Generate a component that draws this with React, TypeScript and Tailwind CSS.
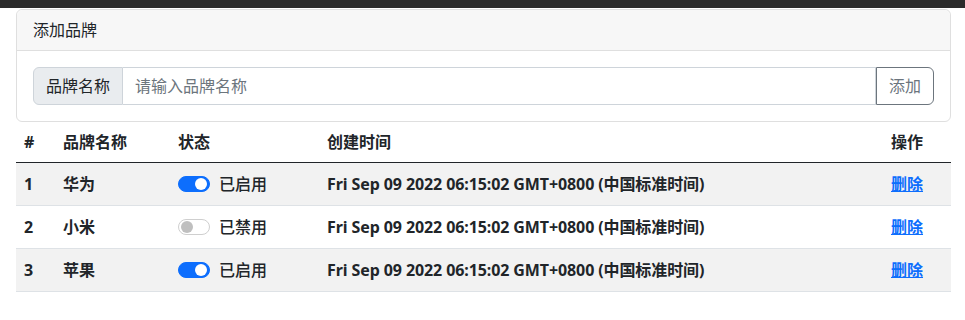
import { useState } from 'react'

type Brand = { id: number; name: string; enabled: boolean; createdAt: string }

const initialBrands: Brand[] = [
  { id: 1, name: '华为', enabled: true, createdAt: 'Fri Sep 09 2022 06:15:02 GMT+0800 (中国标准时间)' },
  { id: 2, name: '小米', enabled: false, createdAt: 'Fri Sep 09 2022 06:15:02 GMT+0800 (中国标准时间)' },
  { id: 3, name: '苹果', enabled: true, createdAt: 'Fri Sep 09 2022 06:15:02 GMT+0800 (中国标准时间)' },
]

// 开关组件
function Switch({ on }: { on: boolean }) {
  return (
    <span
      className={`flex items-center w-8 h-4 rounded-full border px-[2px] shrink-0 ${
        on ? 'bg-[#0d6efd] border-[#0d6efd] justify-end' : 'bg-white border-[#cfcfcf] justify-start'
      }`}
    >
      <span className={`w-[12px] h-[12px] rounded-full ${on ? 'bg-white' : 'bg-[#bfbfbf]'}`}></span>
    </span>
  )
}

export default function App() {
  const [brands] = useState(initialBrands)

  return (
    <div
      className="min-h-screen bg-white text-[#212529] text-base"
      style={{ fontFamily: '"Noto Sans", "Noto Sans CJK SC", sans-serif' }}
    >
      <div className="h-2 bg-[#2b2b2b]"></div>

      <div className="pl-4 pr-[14px] pt-px">
        {/* 添加品牌 */}
        <div className="border border-[#dfdfdf] rounded-md">
          <div className="bg-[#f7f7f7] border-b border-[#dfdfdf] px-4 py-2 leading-6 rounded-t-md">添加品牌</div>
          <div className="p-4">
            <div className="flex h-[38px]">
              <span className="flex items-center px-3 bg-[#e9ecef] border border-[#ced4da] rounded-l-md">品牌名称</span>
              <input
                className="flex-1 border border-l-0 border-[#ced4da] px-3 outline-none placeholder:text-[#6c757d]"
                placeholder="请输入品牌名称"
              />
              <button className="px-3 border border-[#6c757d] text-[#6c757d] rounded-r-md">添加</button>
            </div>
          </div>
        </div>

        {/* 品牌列表 */}
        <table className="w-full border-collapse text-left">
          <thead>
            <tr className="border-b border-[#212529]">
              <th className="w-[39px] px-2 py-2 leading-6 font-bold">#</th>
              <th className="w-[115px] px-2 py-2 leading-6 font-bold">品牌名称</th>
              <th className="w-[149px] px-2 py-2 leading-6 font-bold">状态</th>
              <th className="px-2 py-2 leading-6 font-bold">创建时间</th>
              <th className="w-[68px] px-2 py-2 leading-6 font-bold">操作</th>
            </tr>
          </thead>
          <tbody>
            {brands.map((b, i) => (
              <tr key={b.id} className={`border-b border-[#dee2e6] font-bold ${i % 2 === 0 ? 'bg-[#f2f2f2]' : 'bg-white'}`}>
                <td className="px-2 py-2 h-[43px]">{b.id}</td>
                <td className="px-2 py-2">{b.name}</td>
                <td className="px-2 py-2">
                  <div className="flex items-center gap-[9px] font-medium">
                    <Switch on={b.enabled} />
                    {b.enabled ? '已启用' : '已禁用'}
                  </div>
                </td>
                <td className="px-2 py-2 tracking-[-0.1px]">{b.createdAt}</td>
                <td className="px-2 py-2">
                  <a href="#" className="text-[#0d6efd] underline">删除</a>
                </td>
              </tr>
            ))}
          </tbody>
        </table>
      </div>
    </div>
  )
}
